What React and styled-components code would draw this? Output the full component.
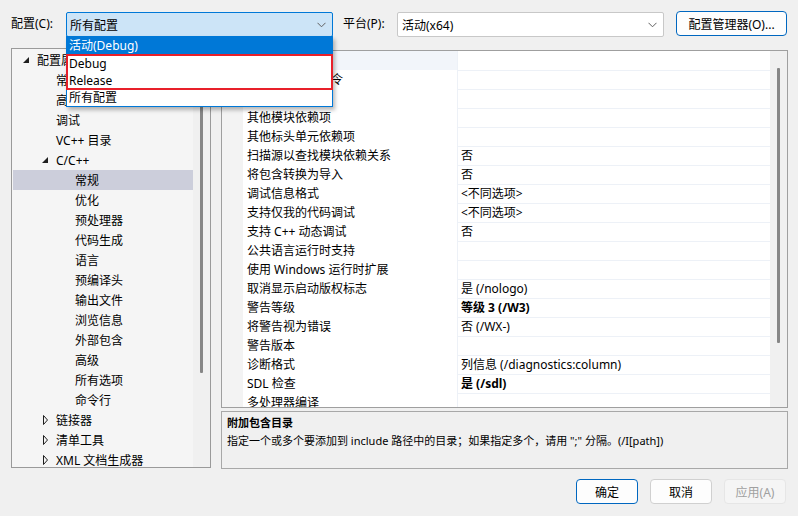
import React from 'react';
import styled, { createGlobalStyle } from 'styled-components';

const Global = createGlobalStyle`
  html, body { margin: 0; padding: 0; background: #f0f0f0; }
  body {
    font-family: "Segoe UI", "Noto Sans", "Noto Sans CJK SC", sans-serif;
    font-size: 12px;
    color: #000;
  }
  * { box-sizing: border-box; }
`;

const Dialog = styled.div`
  position: relative;
  width: 798px;
  height: 516px;
  padding: 11px 10px 0 11px;
  display: flex;
  flex-direction: column;
  background: #f0f0f0;
  overflow: hidden;
`;

const TopBar = styled.div`
  display: flex;
  align-items: flex-start;
  height: 26px;
`;

const Label = styled.div`
  width: ${p => p.$w}px;
  height: 26px;
  line-height: 26px;
  white-space: nowrap;
`;

const Combo = styled.div`
  width: 267px;
  height: 25px;
  margin-top: 1px;
  margin-right: ${p => p.$mr || 0}px;
  display: flex;
  align-items: center;
  justify-content: space-between;
  padding: 0 6px 0 ${p => (p.$active ? 3 : 4)}px;
  border: 1px solid ${p => (p.$active ? '#0078d7' : '#c8c8c8')};
  border-radius: 2px;
  background: ${p => (p.$active ? '#cce4f7' : '#fff')};
  white-space: nowrap;
`;

const Chevron = () => (
  <svg width="9" height="6" viewBox="0 0 9 6">
    <polyline points="0.5,0.8 4.5,4.8 8.5,0.8" fill="none" stroke="#606060" strokeWidth="1" />
  </svg>
);

const Button = styled.div`
  width: ${p => p.$w || 62}px;
  height: 25px;
  display: flex;
  align-items: center;
  justify-content: center;
  border: 1px solid ${p => (p.$primary ? '#0067c0' : p.$disabled ? '#e6e6e6' : '#d0d0d0')};
  border-radius: 4px;
  background: ${p => (p.$disabled ? '#f5f5f5' : '#fdfdfd')};
  color: ${p => (p.$disabled ? '#a0a0a0' : '#000')};
  white-space: nowrap;
`;

const Main = styled.div`
  display: flex;
  gap: 10px;
  margin-top: 11px;
`;

const Tree = styled.div`
  width: 200px;
  height: 420px;
  border: 1px solid #9a9a9a;
  background: #f5f5f5;
  display: flex;
  overflow: hidden;
  padding: 1px 0 0 1px;
`;

const TreeList = styled.div`
  width: 180px;
  display: flex;
  flex-direction: column;
`;

const TreeRow = styled.div`
  height: 20px;
  flex: none;
  display: flex;
  align-items: center;
  padding-left: ${p => 10 + (p.$level - 1) * 19}px;
  background: ${p => (p.$selected ? '#cccedb' : 'transparent')};
  white-space: nowrap;
`;

const Expander = styled.div`
  width: 14px;
  height: 20px;
  flex: none;
  display: flex;
  align-items: center;
`;

const ScrollCol = styled.div`
  position: relative;
  width: 17px;
  flex: none;
  background: #f0f0f0;
`;

const Thumb = styled.div`
  position: absolute;
  left: 7px;
  width: 3px;
  top: ${p => p.$top}px;
  height: ${p => p.$h}px;
  background: #868686;
  border-radius: 1px;
`;

const Right = styled.div`
  width: 567px;
  padding-top: 2px;
  display: flex;
  flex-direction: column;
  gap: 3px;
`;

const Grid = styled.div`
  height: 358px;
  border: 1px solid #9f9f9f;
  background: #fff;
  display: flex;
  overflow: hidden;
`;

const GridBody = styled.div`
  flex: 1;
  display: flex;
  flex-direction: column;
  overflow: hidden;
`;

const GridRow = styled.div`
  display: grid;
  grid-template-columns: 21px 215px 1fr;
  height: 19px;
  flex: none;
`;

const Gutter = styled.div`
  background: #f3f3f3;
`;

const NameCell = styled.div`
  border-bottom: 1px solid #edf1f7;
  border-right: 1px solid #edf1f7;
  padding: 1px 0 0 4px;
  line-height: 18px;
  white-space: nowrap;
  background: ${p => (p.$selected ? '#f2f5fa' : '#fff')};
`;

const ValueCell = styled.div`
  border-bottom: 1px solid #edf1f7;
  padding: 1px 0 0 3px;
  line-height: 18px;
  white-space: nowrap;
  font-weight: ${p => (p.$bold ? 700 : 400)};
`;

const Desc = styled.div`
  height: 58px;
  border: 1px solid #a8a8a8;
  background: #f0f0f0;
  padding: 2px 5px;
  font-size: 11px;
`;

const DescTitle = styled.div`
  font-weight: 700;
  line-height: 18px;
`;

const DescText = styled.div`
  line-height: 18px;
  white-space: nowrap;
`;

const Footer = styled.div`
  display: flex;
  justify-content: flex-end;
  gap: 12px;
  margin-top: 10px;
  padding-right: 2px;
`;

const DropList = styled.div`
  position: absolute;
  left: 66px;
  top: 36px;
  width: 267px;
  border: 1px solid #0078d7;
  background: #fff;
  box-shadow: 2px 3px 4px rgba(0, 0, 0, 0.28);
  display: flex;
  flex-direction: column;
`;

const DropItem = styled.div`
  height: ${p => p.$h || 16}px;
  line-height: ${p => p.$h || 16}px;
  padding-left: 2px;
  padding-top: ${p => p.$pt || 0}px;
  background: ${p => (p.$hl ? '#0078d7' : '#fff')};
  color: ${p => (p.$hl ? '#fff' : '#000')};
  white-space: nowrap;
`;

const RedBox = styled.div`
  position: absolute;
  left: 66px;
  top: 54px;
  width: 267px;
  height: 36px;
  border: 2px solid #e8202a;
  pointer-events: none;
`;

const ExpandedIcon = () => (
  <svg width="6" height="6" viewBox="0 0 6 6">
    <polygon points="6,0 6,6 0,6" fill="#1e1e1e" />
  </svg>
);

const CollapsedIcon = () => (
  <svg width="6" height="10" viewBox="0 0 6 10">
    <polygon points="1.5,0.5 5.5,5 1.5,9.5" fill="none" stroke="#1e1e1e" strokeWidth="1" />
  </svg>
);

const tree = [
  { l: 1, t: '配置属性', e: 'open' },
  { l: 2, t: '常规' },
  { l: 2, t: '高级' },
  { l: 2, t: '调试' },
  { l: 2, t: 'VC++ 目录' },
  { l: 2, t: 'C/C++', e: 'open' },
  { l: 3, t: '常规', s: true },
  { l: 3, t: '优化' },
  { l: 3, t: '预处理器' },
  { l: 3, t: '代码生成' },
  { l: 3, t: '语言' },
  { l: 3, t: '预编译头' },
  { l: 3, t: '输出文件' },
  { l: 3, t: '浏览信息' },
  { l: 3, t: '外部包含' },
  { l: 3, t: '高级' },
  { l: 3, t: '所有选项' },
  { l: 3, t: '命令行' },
  { l: 2, t: '链接器', e: 'closed' },
  { l: 2, t: '清单工具', e: 'closed' },
  { l: 2, t: 'XML 文档生成器', e: 'closed' },
];

const rows = [
  { n: '附加包含目录', v: '', s: true },
  { n: '附加模块引用命令', v: '' },
  { n: '附加 BMI 目录', v: '' },
  { n: '其他模块依赖项', v: '' },
  { n: '其他标头单元依赖项', v: '' },
  { n: '扫描源以查找模块依赖关系', v: '否' },
  { n: '将包含转换为导入', v: '否' },
  { n: '调试信息格式', v: '<不同选项>' },
  { n: '支持仅我的代码调试', v: '<不同选项>' },
  { n: '支持 C++ 动态调试', v: '否' },
  { n: '公共语言运行时支持', v: '' },
  { n: '使用 Windows 运行时扩展', v: '' },
  { n: '取消显示启动版权标志', v: '是 (/nologo)' },
  { n: '警告等级', v: '等级 3 (/W3)', b: true },
  { n: '将警告视为错误', v: '否 (/WX-)' },
  { n: '警告版本', v: '' },
  { n: '诊断格式', v: '列信息 (/diagnostics:column)' },
  { n: 'SDL 检查', v: '是 (/sdl)', b: true },
  { n: '多处理器编译', v: '' },
];

export default function App() {
  return (
    <>
      <Global />
      <Dialog>
        <TopBar>
          <Label $w={55}>配置(C):</Label>
          <Combo $active $mr={10}>
            <span>所有配置</span>
            <Chevron />
          </Combo>
          <Label $w={54}>平台(P):</Label>
          <Combo $mr={12}>
            <span>活动(x64)</span>
            <Chevron />
          </Combo>
          <Button $primary $w={111}>配置管理器(O)...</Button>
        </TopBar>

        <Main>
          <Tree>
            <TreeList>
              {tree.map((it, i) => (
                <TreeRow key={i} $level={it.l} $selected={it.s}>
                  <Expander>
                    {it.e === 'open' && <ExpandedIcon />}
                    {it.e === 'closed' && <CollapsedIcon />}
                  </Expander>
                  {it.t}
                </TreeRow>
              ))}
            </TreeList>
            <ScrollCol>
              <Thumb $top={3} $h={320} />
            </ScrollCol>
          </Tree>

          <Right>
            <Grid>
              <GridBody>
                {rows.map((r, i) => (
                  <GridRow key={i}>
                    <Gutter />
                    <NameCell $selected={r.s}>{r.n}</NameCell>
                    <ValueCell $bold={r.b}>{r.v}</ValueCell>
                  </GridRow>
                ))}
              </GridBody>
              <ScrollCol>
                <Thumb $top={17} $h={275} />
              </ScrollCol>
            </Grid>
            <Desc>
              <DescTitle>附加包含目录</DescTitle>
              <DescText>指定一个或多个要添加到 include 路径中的目录；如果指定多个，请用 ";" 分隔。(/I[path])</DescText>
            </Desc>
          </Right>
        </Main>

        <Footer>
          <Button $primary>确定</Button>
          <Button>取消</Button>
          <Button $disabled>应用(A)</Button>
        </Footer>

        <DropList>
          <DropItem $hl $h={17}>活动(Debug)</DropItem>
          <DropItem $h={18} $pt={1}>Debug</DropItem>
          <DropItem $h={17}>Release</DropItem>
          <DropItem $h={17}>所有配置</DropItem>
        </DropList>
        <RedBox />
      </Dialog>
    </>
  );
}
